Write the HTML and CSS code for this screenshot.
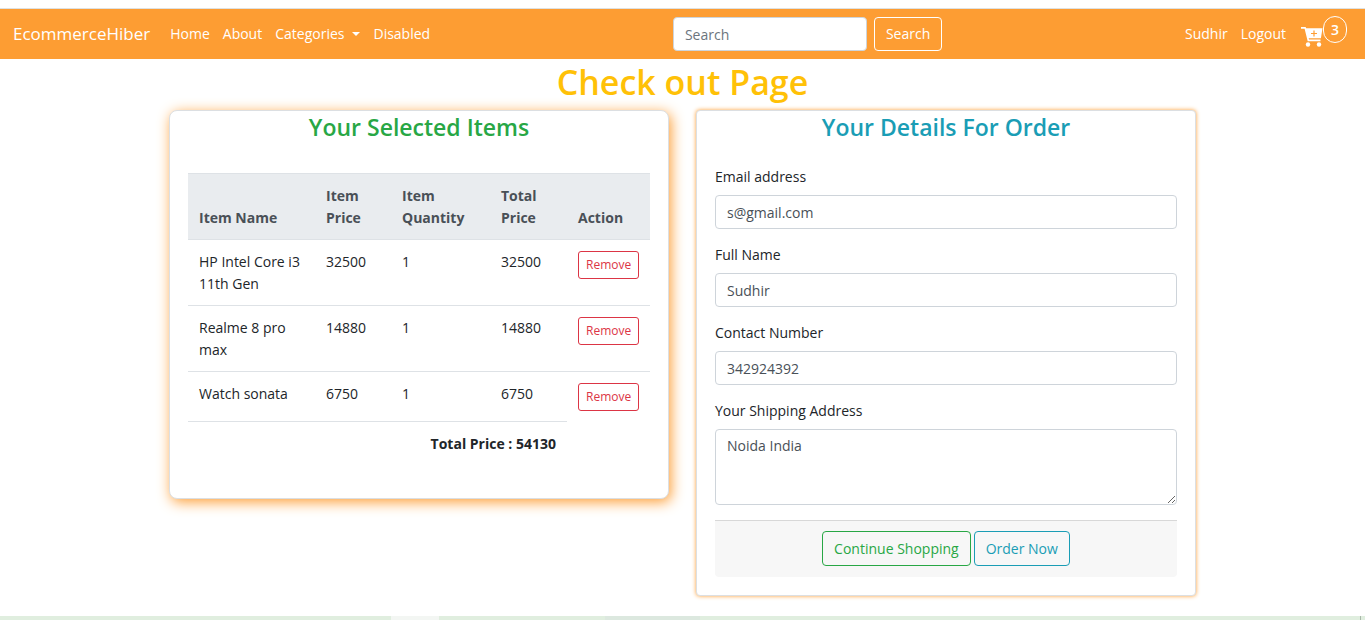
FILE: index.html
```html
<!DOCTYPE html>
<html lang="en">
<head>
<meta charset="utf-8">
<meta name="viewport" content="width=device-width, initial-scale=1">
<title>Check out Page</title>
<link rel="stylesheet" href="styles.css">
</head>
<body>
<header class="navbar">
  <a class="brand" href="#">EcommerceHiber</a>
  <nav class="nav-links">
    <a href="#">Home</a>
    <a href="#">About</a>
    <a class="dropdown" href="#">Categories</a>
    <a href="#">Disabled</a>
  </nav>
  <form class="search">
    <input class="field" type="search" placeholder="Search" aria-label="Search">
    <button class="btn btn-light" type="button">Search</button>
  </form>
  <nav class="nav-links account">
    <a href="#">Sudhir</a>
    <a href="#">Logout</a>
    <a class="cart" href="#" aria-label="Cart">
      <svg class="cart-icon" viewBox="0 0 22 20" aria-hidden="true">
        <path d="M0 0h4.600l.6 1.200H21.500l-1.600 10H7.700l.4 1.400h11.400v1.700H6.700L3.600 1.700H0z" fill="#fff"/>
        <circle cx="7" cy="17.500" r="2.200" fill="#fff"/>
        <circle cx="18" cy="17.500" r="2.200" fill="#fff"/>
        <path d="M10 6.500h6M13 3.500v6" stroke="#fd9d33" stroke-width="1.200"/>
      </svg>
      <span class="count">3</span>
    </a>
  </nav>
</header>

<main class="container">
  <h1 class="page-title">Check out Page</h1>
  <div class="columns">
    <section class="card card-items">
      <h2 class="card-title green">Your Selected Items</h2>
      <div class="card-body">
        <table class="items">
          <colgroup>
            <col class="c-name"><col class="c-price"><col class="c-qty"><col class="c-total"><col class="c-action">
          </colgroup>
          <thead>
            <tr><th>Item Name</th><th>Item Price</th><th>Item Quantity</th><th>Total Price</th><th>Action</th></tr>
          </thead>
          <tbody>
            <tr><td>HP Intel Core i3 11th Gen</td><td>32500</td><td>1</td><td>32500</td><td><button class="btn btn-remove" type="button">Remove</button></td></tr>
            <tr><td>Realme 8 pro max</td><td>14880</td><td>1</td><td>14880</td><td><button class="btn btn-remove" type="button">Remove</button></td></tr>
            <tr><td>Watch sonata</td><td>6750</td><td>1</td><td>6750</td><td><button class="btn btn-remove" type="button">Remove</button></td></tr>
            <tr><td class="sum" colspan="4">Total Price : 54130</td></tr>
          </tbody>
        </table>
      </div>
    </section>

    <section class="card card-details">
      <h2 class="card-title teal">Your Details For Order</h2>
      <form class="card-body details">
        <div class="group">
          <label for="email">Email address</label>
          <input class="field" id="email" type="email" value="s@gmail.com">
        </div>
        <div class="group">
          <label for="name">Full Name</label>
          <input class="field" id="name" type="text" value="Sudhir">
        </div>
        <div class="group">
          <label for="phone">Contact Number</label>
          <input class="field" id="phone" type="text" value="342924392">
        </div>
        <div class="group">
          <label for="address">Your Shipping Address</label>
          <textarea class="field area" id="address">Noida India</textarea>
        </div>
        <div class="actions">
          <button class="btn btn-green" type="button">Continue Shopping</button>
          <button class="btn btn-teal" type="button">Order Now</button>
        </div>
      </form>
    </section>
  </div>
</main>

<footer class="strip">
  <span class="s1"></span><span class="s2"></span><span class="s3"></span><span class="s4"></span><span class="s5"></span>
</footer>
</body>
</html>
```
FILE: styles.css
```css
* { box-sizing: border-box; }

body {
  margin: 0;
  min-height: 100vh;
  display: flex;
  flex-direction: column;
  background: #fff;
  color: #212529;
  font: 14px/22px "Open Sans", "Noto Sans", sans-serif;
}

a { color: inherit; text-decoration: none; }

.navbar {
  margin-top: 8px;
  min-height: 51px;
  padding: 0 18px 0 13px;
  display: flex;
  align-items: center;
  justify-content: space-between;
  border-top: 1px solid #dfe1e0;
  background: #fd9d33;
  color: #fff;
}
.brand { font-size: 17px; margin-right: 20px; }
.nav-links { display: flex; align-items: center; gap: 13px; }
.dropdown { display: flex; align-items: center; gap: 8px; }
.dropdown::after {
  content: "";
  border: 4px solid transparent;
  border-top-color: #fff;
  border-bottom: 0;
}
.search { display: flex; gap: 7px; margin: 0 auto; }
.search .field { width: 194px; }

.cart { display: flex; align-items: center; margin-left: 2px; }
.cart-icon { width: 22px; height: 20px; margin-top: 6px; }
.count {
  width: 24px;
  height: 27px;
  margin-bottom: 9px;
  border: 1px solid #fff;
  border-radius: 12px;
  font-weight: 600;
  line-height: 26px;
  text-align: center;
}

.container { width: 100%; max-width: 1027px; margin: 0 auto; }
.page-title {
  margin: 0 0 4px;
  color: #ffc107;
  font-size: 34px;
  font-weight: 600;
  line-height: 47px;
  text-align: center;
}
.columns {
  display: grid;
  grid-template-columns: repeat(auto-fit, minmax(440px, 1fr));
  gap: 27px;
  align-items: start;
}
.card { background: #fff; border: 1px solid #dcdfe2; }
.card-items { border-radius: 8px; box-shadow: 2px 3px 14px #fd9d33; }
.card-details { border-radius: 4px; box-shadow: 0 0 4px #fd9d33; }
.card-title {
  margin: 0;
  font-size: 23px;
  font-weight: 600;
  line-height: 32px;
  text-align: center;
}
.green { color: #28a745; }
.teal { color: #1a9db5; }
.card-body { padding: 30px 18px 33px; }
.details { padding: 23px 18px 18px; }

.items { width: 100%; table-layout: fixed; border-spacing: 0; }
.c-name { width: 127px; }
.c-price { width: 76px; }
.c-qty { width: 99px; }
.c-total { width: 77px; }
.c-action { width: 83px; }
.items th, .items td {
  padding: 11px 11px 10px;
  border-top: 1px solid #dee2e6;
  text-align: left;
  vertical-align: top;
}
.items th {
  background: #e9ecef;
  color: #495057;
  font-weight: 700;
  vertical-align: bottom;
}
.items .sum { font-weight: 700; text-align: right; }

.group { margin-bottom: 15px; }
.group label { display: block; margin-bottom: 7px; }
.field {
  display: block;
  width: 100%;
  height: 34px;
  padding: 5px 11px;
  border: 1px solid #ced4da;
  border-radius: 4px;
  background: #fff;
  color: #495057;
  font: inherit;
}
.field::placeholder { color: #6c757d; opacity: 1; }
.area { height: 76px; resize: vertical; }

.btn {
  height: 34px;
  padding: 0 11px;
  border: 1px solid currentColor;
  border-radius: 4px;
  background: transparent;
  font: inherit;
  white-space: nowrap;
}
.btn-light { color: #fff; }
.btn-remove {
  display: block;
  height: 28px;
  padding: 0 7px;
  border-radius: 3px;
  color: #dc3545;
  font-size: 12px;
}
.actions {
  display: flex;
  justify-content: center;
  gap: 3px;
  padding: 10px 18px 11px;
  border-top: 1px solid #d8d8d8;
  border-radius: 0 0 4px 4px;
  background: #f7f7f7;
}
.actions .btn { height: 35px; }
.btn-green { color: #28a745; }
.btn-teal { color: #1a9db5; }

.strip { display: flex; height: 4px; margin-top: auto; background: #e0eedf; }
.s1 { flex: 391; }
.s2 { flex: 48; background: #f3f6f3; }
.s3 { flex: 166; }
.s4 { flex: 95; background: #dce8df; }
.s5 { flex: 661; margin-right: 4px; border-right: 1px solid #a9b8a9; }
```
